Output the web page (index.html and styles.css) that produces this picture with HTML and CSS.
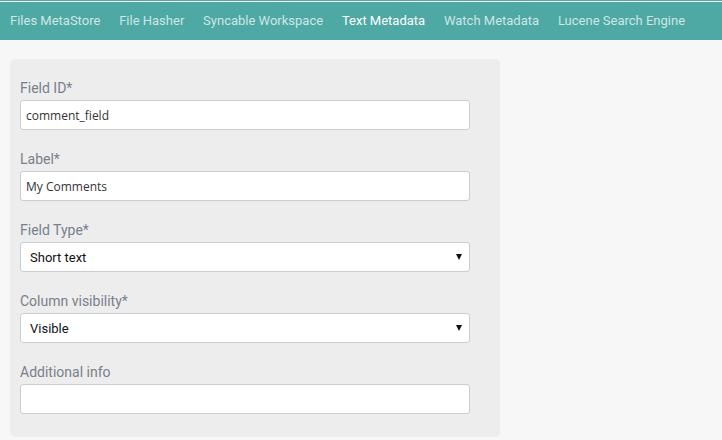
FILE: index.html
```html
<!DOCTYPE html>
<html>
<head>
<meta charset="utf-8">
<link rel="stylesheet" href="styles.css">
</head>
<body>
<header class="topbar">
  <nav class="nav">
    <a class="nav-link">Files MetaStore</a>
    <a class="nav-link">File Hasher</a>
    <a class="nav-link">Syncable Workspace</a>
    <a class="nav-link active">Text Metadata</a>
    <a class="nav-link">Watch Metadata</a>
    <a class="nav-link">Lucene Search Engine</a>
  </nav>
</header>
<main class="page">
  <form class="panel">
    <div class="group">
      <label class="label">Field ID*</label>
      <div class="input">comment_field</div>
    </div>
    <div class="group">
      <label class="label">Label*</label>
      <div class="input">My Comments</div>
    </div>
    <div class="group">
      <label class="label">Field Type*</label>
      <div class="select"><span>Short text</span><span class="arrow"></span></div>
    </div>
    <div class="group">
      <label class="label">Column visibility*</label>
      <div class="select"><span>Visible</span><span class="arrow"></span></div>
    </div>
    <div class="group">
      <label class="label">Additional info</label>
      <div class="input"></div>
    </div>
  </form>
</main>
</body>
</html>
```
FILE: styles.css
```css
html, body {
  margin: 0;
  padding: 0;
  background: #f7f7f7;
  font-family: Roboto, "Liberation Sans", sans-serif;
}
.topbar {
  height: 40px;
  background: linear-gradient(#4ea8a4 0 1px, #ffffff 1px 2px, #4ea8a4 2px);
  box-sizing: border-box;
  padding-top: 2px;
}
.nav {
  display: flex;
  height: 38px;
  align-items: center;
  padding-left: 10px;
  gap: 18.8px;
}
.nav-link {
  font-size: 13px;
  color: #cde7e5;
  line-height: 38px;
  white-space: nowrap;
}
.nav-link.active {
  color: #ffffff;
}
.page {
  padding: 19px 0 0 10px;
}
.panel {
  width: 490px;
  box-sizing: border-box;
  background: #ededed;
  border-radius: 5px;
  padding: 19px 30px 4px 10px;
  display: flex;
  flex-direction: column;
}
.group {
  display: flex;
  flex-direction: column;
  gap: 2px;
  margin-bottom: 19px;
}
.label {
  font-size: 14px;
  line-height: 20px;
  color: #78818a;
}
.input, .select {
  height: 30px;
  box-sizing: border-box;
  background: #fff;
  border: 1px solid #c9cdd2;
  border-radius: 3px;
  display: flex;
  align-items: center;
}
.input {
  padding: 0 5px;
  font-family: "Open Sans", sans-serif;
  font-size: 12px;
  color: #333;
}
.select {
  padding: 0 7px 0 9px;
  justify-content: space-between;
  font-size: 13px;
  color: #111;
}
.arrow {
  width: 0;
  height: 0;
  border-left: 3.5px solid transparent;
  border-right: 3.5px solid transparent;
  border-top: 6px solid #111;
}
```
